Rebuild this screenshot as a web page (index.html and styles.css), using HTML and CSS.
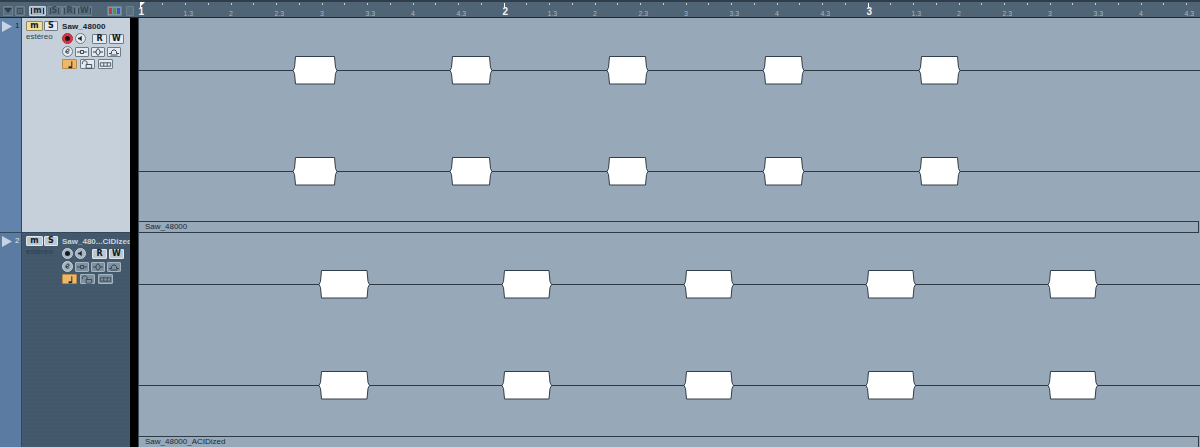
FILE: index.html
```html
<!DOCTYPE html>
<html lang="es">
<head>
<meta charset="utf-8">
<title>Saw_48000</title>
<link rel="stylesheet" href="styles.css">
</head>
<body>
<svg class="defs" width="0" height="0" aria-hidden="true">
  <symbol id="i-speaker" viewBox="0 0 11 11"><path d="M2.500 4.500h1.500l3-2.500v7l-3-2.500H2.500z" fill="#1c2228"/></symbol>
  <symbol id="i-e" viewBox="0 0 11 11"><path d="M3.200 6c2.200.2 4.400-.8 4.400-2.400 0-1.600-2.600-1.400-3.500.3-.9 1.700-.5 3.800 1.200 3.800 1 0 1.700-.5 2.300-1.100" fill="none" stroke="#1c2228" stroke-width="1.100"/></symbol>
  <symbol id="i-a" viewBox="0 0 12 8"><path d="M1 4h3M8 4h3M4.500 2.500h3v3h-3z" fill="none" stroke="#3a4651"/></symbol>
  <symbol id="i-b" viewBox="0 0 12 8"><path d="M6 .5l2 2.500v2L6 7.500 4 5V3zM1 4h3M8 4h3" fill="none" stroke="#3a4651"/></symbol>
  <symbol id="i-c" viewBox="0 0 12 8"><path d="M1 5.500h2.500v-2L5 2h2l1.500 1.500v2H11M2.500 7h7" fill="none" stroke="#3a4651"/></symbol>
  <symbol id="i-note" viewBox="0 0 14 9"><path d="M9.500 1v7" stroke="#1c2228" fill="none"/><path d="M6 6.500h3.500v2H6z" fill="#1c2228"/></symbol>
  <symbol id="i-lock" viewBox="0 0 14 9"><path d="M5.500 8.500V4.500h6v4zM6.500 4.500V2.500C6.500 1 5.200.5 4 .5S1.500 1 1.500 2.500V4" fill="none" stroke="#3a4651"/></symbol>
  <symbol id="i-grid" viewBox="0 0 15 7"><path d="M1.500 1.500h12v4h-12zM5.500 1.500v4M9.500 1.500v4" fill="none" stroke="#3a4651"/></symbol>
</svg>

<div class="app">
  <header class="top">
    <div class="toolbar">
      <span class="tb tb-drop"><svg width="8" height="5" viewBox="0 0 8 5"><path d="M0 0h8L4 5z" fill="#2f3e4a"/></svg></span>
      <span class="tb tb-sq"><svg width="6" height="6" viewBox="0 0 6 6"><path d="M.5.500h5v5h-5zM3 1.500v3" fill="none" stroke="#3c4e5c"/></svg></span>
      <span class="tb tb-letter tb-on">m</span>
      <span class="tb tb-letter">S</span>
      <span class="tb tb-letter">R</span>
      <span class="tb tb-letter">W</span>
      <span class="tb-spacer"></span>
      <span class="tb tb-colors"><i class="c-red"></i><i class="c-green"></i><i class="c-blue"></i></span>
      <span class="tb tb-thin"></span>
    </div>
    <div class="ruler">
      <div class="bar-cell major"><svg class="flag" width="5" height="5" viewBox="0 0 5 5"><path d="M0 0h5L0 5z" fill="#fff"/></svg><b>1</b></div><div class="bar-cell"><span>1.3</span></div><div class="bar-cell"><span>2</span></div><div class="bar-cell"><span>2.3</span></div><div class="bar-cell"><span>3</span></div><div class="bar-cell"><span>3.3</span></div><div class="bar-cell"><span>4</span></div><div class="bar-cell"><span>4.3</span></div>
      <div class="bar-cell major"><b>2</b></div><div class="bar-cell"><span>1.3</span></div><div class="bar-cell"><span>2</span></div><div class="bar-cell"><span>2.3</span></div><div class="bar-cell"><span>3</span></div><div class="bar-cell"><span>3.3</span></div><div class="bar-cell"><span>4</span></div><div class="bar-cell"><span>4.3</span></div>
      <div class="bar-cell major"><b>3</b></div><div class="bar-cell"><span>1.3</span></div><div class="bar-cell"><span>2</span></div><div class="bar-cell"><span>2.3</span></div><div class="bar-cell"><span>3</span></div><div class="bar-cell"><span>3.3</span></div><div class="bar-cell"><span>4</span></div><div class="bar-cell"><span>4.3</span></div>
    </div>
  </header>

  <section class="track track-light">
    <div class="strip">
      <svg class="play" width="10" height="11" viewBox="0 0 10 11"><path d="M0 0l10 5.500L0 11z" fill="#c6d3e2"/></svg>
      <span class="num">1</span>
    </div>
    <div class="inspector">
      <div class="row-top">
        <span class="btn btn-m on">m</span>
        <span class="btn btn-s">S</span>
        <span class="name">Saw_48000</span>
      </div>
      <div class="row-body">
        <span class="kind">estéreo</span>
        <div class="controls">
          <div class="ctl-row">
            <span class="round rec on"></span>
            <span class="round"><svg width="9" height="9"><use href="#i-speaker"/></svg></span>
            <span class="btn btn-r">R</span>
            <span class="btn btn-w">W</span>
          </div>
          <div class="ctl-row">
            <span class="round"><svg width="9" height="9"><use href="#i-e"/></svg></span>
            <span class="btn btn-i"><svg width="12" height="8"><use href="#i-a"/></svg></span>
            <span class="btn btn-i"><svg width="12" height="8"><use href="#i-b"/></svg></span>
            <span class="btn btn-i"><svg width="12" height="8"><use href="#i-c"/></svg></span>
          </div>
          <div class="ctl-row ctl-last">
            <span class="btn btn-w2 amber"><svg width="14" height="9"><use href="#i-note"/></svg></span>
            <span class="btn btn-w2"><svg width="14" height="9"><use href="#i-lock"/></svg></span>
            <span class="btn btn-w2"><svg width="15" height="7"><use href="#i-grid"/></svg></span>
          </div>
        </div>
      </div>
    </div>
    <div class="gutter"></div>
    <div class="lane">
      <svg class="wave" viewBox="0 0 1061 203">
        <path class="wire" d="M0 52.500H1061M0 153.500H1061"/>
        <g class="blob" id="row-a">
          <path d="M156.500 38.500H195.500l1 11 1.500 3-1.500 3-1 10.500H156.500l-1 -10.500-1.500-3 1.500-3z"/>
          <path d="M313.500 38.500H350.500l1 11 1.500 3-1.500 3-1 10.500H313.500l-1-10.500-1.500-3 1.500-3z"/>
          <path d="M470.500 38.500H506.500l1 11 1.500 3-1.500 3-1 10.500H470.500l-1-10.500-1.500-3 1.500-3z"/>
          <path d="M626.500 38.500H662.500l1 11 1.500 3-1.500 3-1 10.500H626.500l-1-10.500-1.500-3 1.500-3z"/>
          <path d="M782.500 38.500H818.500l1 11 1.500 3-1.500 3-1 10.500H782.500l-1-10.500-1.500-3 1.500-3z"/>
        </g>
        <use href="#row-a" y="101"/>
      </svg>
      <div class="part-name">Saw_48000</div>
    </div>
  </section>

  <section class="track track-dark">
    <div class="strip">
      <svg class="play" width="10" height="11" viewBox="0 0 10 11"><path d="M0 0l10 5.500L0 11z" fill="#c6d3e2"/></svg>
      <span class="num">2</span>
    </div>
    <div class="inspector">
      <div class="row-top">
        <span class="btn btn-m">m</span>
        <span class="btn btn-s">S</span>
        <span class="name">Saw_480...CIDized</span>
      </div>
      <div class="row-body">
        <span class="kind">estéreo</span>
        <div class="controls">
          <div class="ctl-row">
            <span class="round rec"></span>
            <span class="round"><svg width="9" height="9"><use href="#i-speaker"/></svg></span>
            <span class="btn btn-r">R</span>
            <span class="btn btn-w">W</span>
          </div>
          <div class="ctl-row">
            <span class="round"><svg width="9" height="9"><use href="#i-e"/></svg></span>
            <span class="btn btn-i"><svg width="12" height="8"><use href="#i-a"/></svg></span>
            <span class="btn btn-i"><svg width="12" height="8"><use href="#i-b"/></svg></span>
            <span class="btn btn-i"><svg width="12" height="8"><use href="#i-c"/></svg></span>
          </div>
          <div class="ctl-row ctl-last">
            <span class="btn btn-w2 amber"><svg width="14" height="9"><use href="#i-note"/></svg></span>
            <span class="btn btn-w2"><svg width="14" height="9"><use href="#i-lock"/></svg></span>
            <span class="btn btn-w2"><svg width="15" height="7"><use href="#i-grid"/></svg></span>
          </div>
        </div>
      </div>
    </div>
    <div class="gutter"></div>
    <div class="lane">
      <svg class="wave" viewBox="0 0 1061 203">
        <path class="wire" d="M0 51.500H1061M0 152.500H1061"/>
        <g class="blob" id="row-b">
          <path d="M182.500 37.500H228l1 11 1.500 3-1.500 3-1 10.500H182.500l-1-10.500-1.500-3 1.500-3z"/>
          <path d="M365.500 37.500H410l1 11 1.500 3-1.500 3-1 10.500H365.500l-1-10.500-1.500-3 1.500-3z"/>
          <path d="M547.500 37.500H592l1 11 1.500 3-1.500 3-1 10.500H547.500l-1-10.500-1.500-3 1.500-3z"/>
          <path d="M729.500 37.500H774l1 11 1.500 3-1.500 3-1 10.500H729.500l-1-10.500-1.500-3 1.500-3z"/>
          <path d="M911.500 37.500H956l1 11 1.500 3-1.500 3-1 10.500H911.500l-1-10.500-1.500-3 1.500-3z"/>
        </g>
        <use href="#row-b" y="101"/>
      </svg>
      <div class="part-name">Saw_48000_ACIDized</div>
    </div>
  </section>
</div>
</body>
</html>
```
FILE: styles.css
```css
* { box-sizing: border-box; }
html, body { margin: 0; padding: 0; }
body {
  width: 1200px;
  height: 447px;
  overflow: hidden;
  background: #000;
  font-family: "Liberation Sans", Arial, sans-serif;
}
.defs { position: absolute; }
.app { display: flex; flex-direction: column; height: 447px; }

/* top bar */
.top {
  display: flex;
  height: 18px;
  flex: none;
  background: #4f6475;
  border-top: 2px solid #2f3e4a;
  border-bottom: 1px solid #1e2a33;
}
.toolbar {
  width: 138px;
  flex: none;
  display: flex;
  align-items: center;
  padding: 2px 4px 0 3px;
}
.tb {
  display: flex;
  align-items: center;
  justify-content: center;
  gap: 1px;
  height: 10px;
  background: #5a6f81;
  border: 1px solid #6d8292;
  border-radius: 1px;
  color: #384956;
  font-family: "DejaVu Sans", sans-serif;
  font-size: 8px;
  font-weight: 700;
  line-height: 1;
}
.tb-drop { width: 10px; }
.tb-sq { width: 10px; margin: 0 4px 0 2px; }
.tb-letter { width: 15px; }
.tb-letter::before, .tb-letter::after {
  content: "";
  width: 1px;
  height: 6px;
  background: currentColor;
}
.tb-on { width: 17px; margin-right: 1px; background: #a6b6c3; border-color: #c4d1da; color: #1b2730; }
.tb-spacer { flex: 1; }
.tb-colors { width: 15px; padding: 0; background: #7e93a3; }
.tb-colors i { display: block; width: 3px; height: 6px; }
.c-red { background: #c33a3a; }
.c-green { background: #37a24b; }
.c-blue { background: #3956c5; }
.tb-thin { width: 8px; margin-left: 4px; }

.ruler { display: flex; flex: 1; padding-left: 1.500px; overflow: hidden; }
.bar-cell {
  position: relative;
  width: 45.500px;
  flex: none;
  font-size: 7px;
  color: #a9b8c4;
  line-height: 1;
}
.bar-cell::before, .bar-cell::after {
  content: "";
  position: absolute;
  top: 1px;
  width: 1px;
  height: 2px;
  background: #c3cfd8;
}
.bar-cell::before { left: 0; }
.bar-cell::after { left: 22.750px; }
.bar-cell span { position: absolute; left: -1.500px; top: 8px; }
.bar-cell b { position: absolute; left: -1px; top: 5px; font-size: 10px; color: #eef3f6; }
.bar-cell.major::before { background: #fff; height: 5px; }
.flag { position: absolute; left: 0; top: 0; }

/* tracks */
.track { display: flex; flex: none; }
.track-light { height: 215px; }
.track-dark { height: 214px; }
.strip {
  width: 22px;
  flex: none;
  display: flex;
  align-items: flex-start;
  gap: 3px;
  padding: 3px 0 0 2px;
  background: #6284ac;
  border-right: 1px solid #33475a;
  border-bottom: 1px solid #33475a;
}
.num { font-size: 8px; line-height: 9px; color: #17222c; }
.track-dark .strip { background: #5b7ba3; border-bottom: 0; }
.track-dark .num { color: #dfe7ef; }
.play { flex: none; }

.inspector {
  width: 108px;
  flex: none;
  padding: 3px 0 0 4px;
  border-bottom: 1px solid #33475a;
}
.track-light .inspector { background: #c5d0da; color: #18222b; }
.track-dark .inspector {
  background: repeating-linear-gradient(#45596c 0 2px, #43576a 2px 4px);
  color: #dbe4ec;
  border-bottom: 0;
}
.row-top { display: flex; align-items: center; gap: 1px; height: 10px; }
.name { margin-left: 3px; font-size: 8px; font-weight: 700; white-space: nowrap; letter-spacing: .1px; }
.track-dark .name { color: #c8d4de; letter-spacing: 0; }

.row-body { display: flex; margin-top: 2px; }
.kind { width: 36px; flex: none; font-size: 8px; line-height: 10px; color: #33424e; margin-top: -1px; }
.track-dark .kind { color: #2a3e51; }
.controls { display: flex; flex-direction: column; gap: 2px; }
.ctl-row { display: flex; align-items: center; gap: 2px; height: 11px; }
.ctl-last { gap: 3px; height: 10px; }

.btn {
  display: flex;
  align-items: center;
  justify-content: center;
  height: 10px;
  background: #e4eaef;
  border: 1px solid #6d7c89;
  border-radius: 1px;
  font-family: "DejaVu Sans", sans-serif;
  font-size: 8px;
  font-weight: 700;
  line-height: 1;
  color: #10181f;
  flex: none;
}
.track-dark .btn { background: #7d909f; border-color: #a5b5c2; }
.track-dark .btn-m, .track-dark .btn-s, .track-dark .btn-r, .track-dark .btn-w { background: #bcc8d2; border-color: #dfe6ec; }
.btn-m { width: 17px; }
.btn-s { width: 14px; }
.btn-r { width: 15px; margin-left: 4px; }
.btn-w { width: 15px; }
.btn-i { width: 14px; }
.btn-w2 { width: 15px; }
.btn.on { background: #efdf9e; border-color: #8f8a62; }
.btn.amber, .track-dark .btn.amber { background: #eeb868; border-color: #b78a4a; }

.round {
  display: flex;
  align-items: center;
  justify-content: center;
  width: 11px;
  height: 11px;
  border-radius: 50%;
  background: #e4eaef;
  border: 1px solid #6d7c89;
  flex: none;
}
.track-dark .round { background: #a5b5c2; border-color: #c5d1da; }
.round.rec::after {
  content: "";
  display: block;
  width: 5px;
  height: 5px;
  border-radius: 50%;
  background: #14191e;
}
.round.rec.on { background: #e0333f; border-color: #a8303a; }

/* lanes */
.gutter { width: 8px; flex: none; background: #000; }
.lane {
  flex: 1;
  display: flex;
  flex-direction: column;
  background: #97a8b9;
  border-left: 1px solid #3e4e5b;
}
.wave { flex: none; width: 1061px; height: 203px; display: block; }
.wire { stroke: #2d3a46; stroke-width: 1; fill: none; }
.blob path { fill: #fff; stroke: #323e4a; stroke-width: 1; }
.part-name {
  height: 12px;
  flex: none;
  margin-right: 1px;
  padding-left: 6px;
  font-size: 8px;
  line-height: 10px;
  color: #1f2a33;
  border: 1px solid #2e3b47;
  border-width: 1px 1px 1px 0;
}
.track-dark .part-name { height: 11px; border-bottom: 0; }
```
